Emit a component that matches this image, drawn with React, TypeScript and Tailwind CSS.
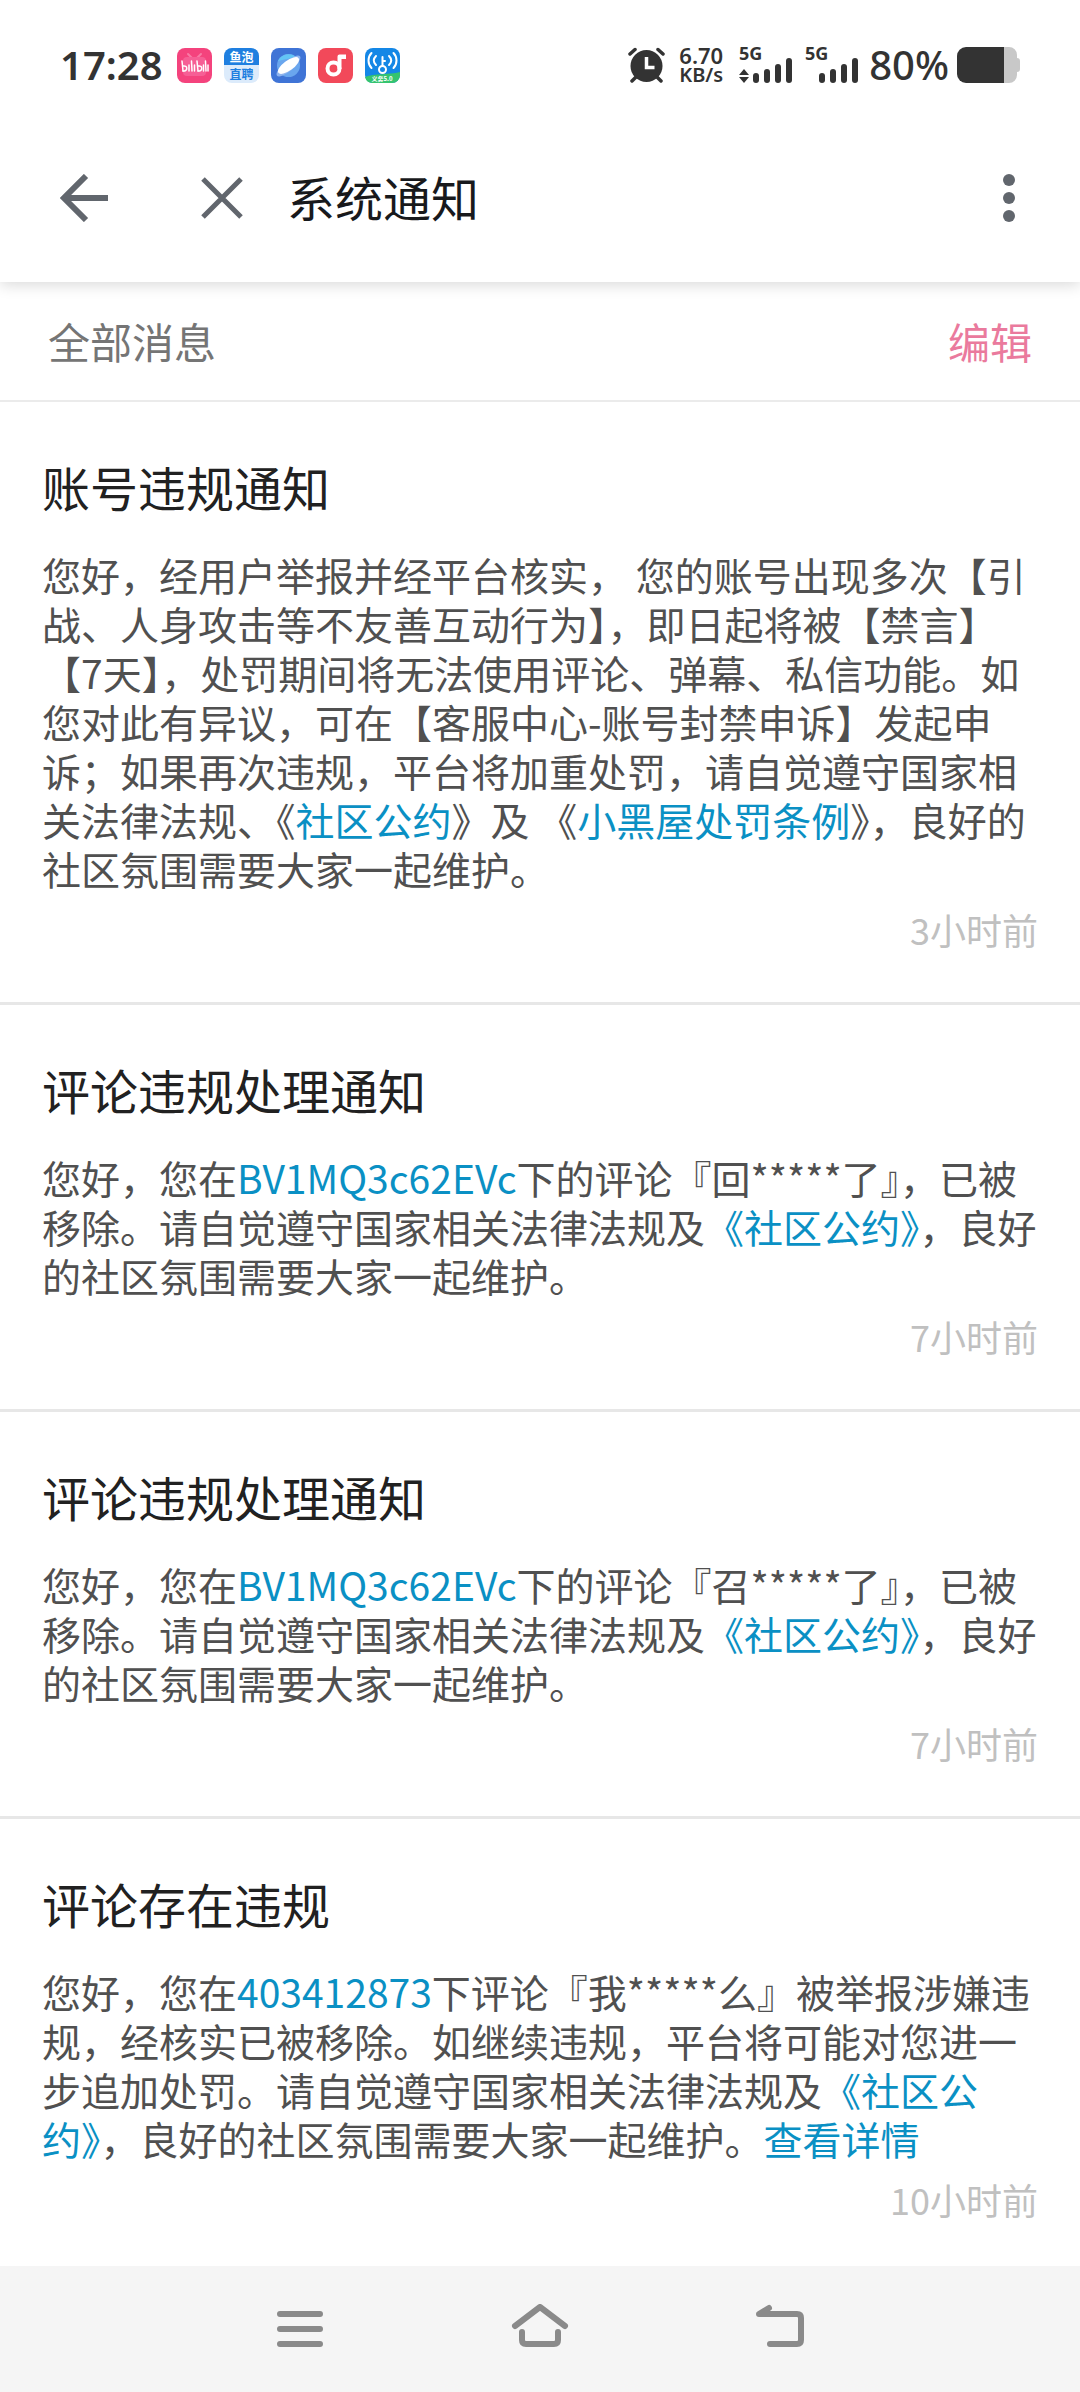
import type { ReactNode } from 'react';

type Notice = {
  id: number;
  title: string;
  time: string;
  body: ReactNode;
};

function TextLink({ children }: { children: ReactNode }) {
  return (
    <a href="#" className="text-[#0a90c4]">
      {children}
    </a>
  );
}

const notices: Notice[] = [
  {
    id: 1,
    title: '账号违规通知',
    time: '3小时前',
    body: (
      <>
        您好，经用户举报并经平台核实， 您的账号出现多次【引战、人身攻击等不友善互动行为】，即日起将被【禁言】【7天】，处罚期间将无法使用评论、弹幕、私信功能。如您对此有异议，可在【客服中心-账号封禁申诉】发起申诉；如果再次违规，平台将加重处罚，请自觉遵守国家相关法律法规、《<TextLink>社区公约</TextLink>》及 《<TextLink>小黑屋处罚条例</TextLink>》，良好的社区氛围需要大家一起维护。
      </>
    ),
  },
  {
    id: 2,
    title: '评论违规处理通知',
    time: '7小时前',
    body: (
      <>
        您好，您在<TextLink>BV1MQ3c62EVc</TextLink>下的评论『回*****了』，已被移除。请自觉遵守国家相关法律法规及<TextLink>《社区公约》</TextLink>，良好的社区氛围需要大家一起维护。
      </>
    ),
  },
  {
    id: 3,
    title: '评论违规处理通知',
    time: '7小时前',
    body: (
      <>
        您好，您在<TextLink>BV1MQ3c62EVc</TextLink>下的评论『召*****了』，已被移除。请自觉遵守国家相关法律法规及<TextLink>《社区公约》</TextLink>，良好的社区氛围需要大家一起维护。
      </>
    ),
  },
  {
    id: 4,
    title: '评论存在违规',
    time: '10小时前',
    body: (
      <>
        您好，您在<TextLink>403412873</TextLink>下评论『我*****么』被举报涉嫌违规，经核实已被移除。如继续违规，平台将可能对您进一步追加处罚。请自觉遵守国家相关法律法规及<TextLink>《社区公约》</TextLink>，良好的社区氛围需要大家一起维护。<TextLink>查看详情</TextLink>
      </>
    ),
  },
];

function BilibiliIcon() {
  return (
    <svg width="35" height="35" viewBox="0 0 35 35" aria-hidden="true">
      <rect width="35" height="35" rx="8" fill="#f4437d" />
      <path d="M11 6l4 4M24 6l-4 4" stroke="#f77ba5" strokeWidth="2" strokeLinecap="round" />
      <rect x="6" y="9" width="23" height="19" rx="4" fill="#f65f95" />
      <g stroke="#fff" strokeWidth="1.5" strokeLinecap="round" fill="none">
        <path d="M5 13l1 10M12 17v6M14.500 13l.5 10M17.500 17v6M20 13l1 10M26.500 17v6M28.500 13l.5 10M31 17v6" />
        <path d="M6 18c5-1 5 5 0 5M21 18c5-1 5 5 0 5" />
      </g>
    </svg>
  );
}

function YupaoIcon() {
  return (
    <svg width="35" height="35" viewBox="0 0 35 35" aria-hidden="true">
      <rect width="35" height="35" rx="8" fill="#dcebfb" />
      <path d="M0 17V8a8 8 0 0 1 8-8h19a8 8 0 0 1 8 8v9z" fill="#1f7fe0" />
      <g fontFamily="'Noto Sans CJK SC', sans-serif" fontWeight="700" fontSize="12" textAnchor="middle">
        <text x="17.500" y="14" fill="#fff">鱼泡</text>
        <text x="17.500" y="31" fill="#1f7fe0">直聘</text>
      </g>
    </svg>
  );
}

function BrowserIcon() {
  return (
    <svg width="35" height="35" viewBox="0 0 35 35" aria-hidden="true">
      <rect width="35" height="35" rx="8" fill="#3f74d6" />
      <circle cx="17.500" cy="17.500" r="11.500" fill="#6aa6ee" />
      <path d="M7 13a11.500 11.500 0 0 1 18-4z" fill="#63c5f5" />
      <ellipse cx="17.500" cy="18" rx="15" ry="5" transform="rotate(-40 17.500 18)" fill="#8fb4ee" />
      <ellipse cx="17.500" cy="17.500" rx="12.500" ry="5" transform="rotate(-36 17.500 17.500)" fill="#fff" />
    </svg>
  );
}

function MusicIcon() {
  return (
    <svg width="35" height="35" viewBox="0 0 35 35" aria-hidden="true">
      <rect width="35" height="35" rx="8" fill="#f2495a" />
      <circle cx="15.500" cy="20.500" r="6" fill="none" stroke="#fff" strokeWidth="4" />
      <path d="M19.500 21V8.500a2 2 0 0 1 2-2H28V11h-4.500v10z" fill="#fff" />
    </svg>
  );
}

function WifiKeyIcon() {
  return (
    <svg width="35" height="35" viewBox="0 0 35 35" aria-hidden="true">
      <rect width="35" height="35" rx="8" fill="#1487e6" />
      <path d="M0 29c10-4 24-2 35-5v3a8 8 0 0 1-8 8H8a8 8 0 0 1-8-6z" fill="#35c46f" />
      <g fill="none" stroke="#fff" strokeWidth="2" strokeLinecap="round">
        <path d="M6.500 5c-4 4-4 11 0 15M11 8c-3 3-3 6 0 9M28.500 5c4 4 4 11 0 15M24 8c3 3 3 6 0 9" />
        <path d="M17.500 18V9M18 13h2" />
        <circle cx="17.500" cy="21.500" r="3.500" />
      </g>
      <text x="17" y="33" fill="#fff" fontFamily="'Noto Sans CJK SC', sans-serif" fontSize="6" fontWeight="700" textAnchor="middle">
        义务5.0
      </text>
    </svg>
  );
}

function AlarmIcon() {
  return (
    <svg width="37" height="36" viewBox="0 0 37 36" aria-hidden="true">
      <g stroke="#333" strokeWidth="3.500" strokeLinecap="round">
        <path d="M2 7l5-4.500M35 7l-5-4.500" />
        <path d="M8 30l-4 4M29 30l4 4" />
      </g>
      <circle cx="18.500" cy="19" r="16" fill="#333" />
      <path d="M18.500 10v10.500h8" fill="none" stroke="#fff" strokeWidth="3.500" />
    </svg>
  );
}

function SignalIcon({ active = false }: { active?: boolean }) {
  return (
    <svg width="54" height="52" viewBox="0 -8 54 52" fill="#333" role="img" aria-label="5G">
      <text x="0" y="13" fontFamily="'Noto Sans', sans-serif" fontSize="18" fontWeight="700">
        5G
      </text>
      {active && <path d="M0 28l5-6 5 6zM0 30l5 6 5-6z" />}
      <rect x="14" y="26" width="6" height="10" rx="3" />
      <rect x="25" y="22" width="6" height="14" rx="3" />
      <rect x="36" y="17" width="6" height="19" rx="3" />
      <rect x="47" y="11" width="6" height="25" rx="3" />
    </svg>
  );
}

function BatteryIcon() {
  return (
    <svg width="63" height="36" viewBox="0 0 63 36" aria-hidden="true">
      <path d="M47 0h5a8 8 0 0 1 8 8v3a3 3 0 0 1 3 3v8a3 3 0 0 1-3 3v3a8 8 0 0 1-8 8h-5z" fill="#c8c8c8" />
      <path d="M9 0h38v36H9a9 9 0 0 1-9-9V9a9 9 0 0 1 9-9z" fill="#333" />
    </svg>
  );
}

function StatusBar() {
  return (
    <div className="flex h-[114px] items-center justify-between px-[60px] pt-4 font-['Noto_Sans',sans-serif] text-[#333]">
      <div className="flex items-center gap-3.5">
        <span className="text-[40px] leading-none font-semibold">17:28</span>
        <div className="flex gap-3">
          <BilibiliIcon />
          <YupaoIcon />
          <BrowserIcon />
          <MusicIcon />
          <WifiKeyIcon />
        </div>
      </div>
      <div className="flex items-center">
        <AlarmIcon />
        <div className="mr-4 ml-3.5 flex flex-col items-end font-semibold">
          <span className="text-[22px] leading-5">6.70</span>
          <span className="text-[20px] leading-5">KB/s</span>
        </div>
        <SignalIcon active />
        <span className="ml-3">
          <SignalIcon />
        </span>
        <span className="mr-2 ml-2.5 text-[40px] leading-none font-medium">80%</span>
        <BatteryIcon />
      </div>
    </div>
  );
}

function Header() {
  return (
    <header className="relative z-10 bg-white shadow-[0_3px_14px_rgba(0,0,0,0.15)]">
      <StatusBar />
      <div className="flex h-[168px] items-center px-[60px] text-[#61666d]">
        <button type="button" aria-label="返回">
          <svg width="48" height="48" viewBox="0 0 48 48" fill="none" stroke="currentColor" strokeWidth="6">
            <path d="M48 24H5M26 2L4 24l22 22" />
          </svg>
        </button>
        <button type="button" aria-label="关闭" className="ml-[93px]">
          <svg width="42" height="42" viewBox="0 0 42 42" fill="none" stroke="currentColor" strokeWidth="5">
            <path d="M2 2l38 38M40 2L2 40" />
          </svg>
        </button>
        <h1 className="ml-11 flex-1 pb-1 text-[48px] leading-[60px] text-[#18191c]">系统通知</h1>
        <button type="button" aria-label="更多" className="-mr-1">
          <svg width="30" height="48" viewBox="0 0 30 48" fill="currentColor">
            <circle cx="15" cy="6" r="6" />
            <circle cx="15" cy="24" r="6" />
            <circle cx="15" cy="42" r="6" />
          </svg>
        </button>
      </div>
    </header>
  );
}

function NoticeItem({ notice }: { notice: Notice }) {
  return (
    <li className="border-b-[3px] border-[#e7e7e7] px-[42px] pt-[54px] pb-[49px] last:border-b-0 last:pb-6">
      <h2 className="text-[48px] leading-[60px] text-[#212121]">{notice.title}</h2>
      <p className="mt-[34px] text-[39px] leading-[49px] text-[#505050]">{notice.body}</p>
      <p className="mt-3 text-right text-[36px] leading-[48px] text-[#c0c0c0]">{notice.time}</p>
    </li>
  );
}

function BottomNav() {
  return (
    <nav className="bg-[#f5f5f5] text-[#8a8a8a]">
      <div className="mx-auto grid h-[126px] w-2/3 grid-cols-3 place-items-center pb-1.5">
        <button type="button" aria-label="最近任务">
          <svg width="60" height="44" viewBox="0 0 60 44" fill="none" stroke="currentColor" strokeWidth="6" strokeLinecap="round">
            <path d="M10 10h40M10 25h40M10 40h40" />
          </svg>
        </button>
        <button type="button" aria-label="主页">
          <svg width="60" height="44" viewBox="0 0 60 44" fill="none" stroke="currentColor" strokeWidth="6" strokeLinecap="round" strokeLinejoin="round">
            <path d="M5 22L30 3l25 19" />
            <path d="M12 28v8q0 4 4 4h28q4 0 4-4v-8" />
          </svg>
        </button>
        <button type="button" aria-label="后退">
          <svg width="60" height="44" viewBox="0 0 60 44" fill="none" stroke="currentColor" strokeWidth="6" strokeLinecap="round" strokeLinejoin="round">
            <path d="M20 40h27q4 0 4-4V14q0-4-4-4H9l10-6" />
          </svg>
        </button>
      </div>
    </nav>
  );
}

export default function App() {
  return (
    <div lang="zh-CN" className="flex min-h-screen flex-col bg-white font-['Noto_Sans_CJK_SC',sans-serif]">
      <Header />
      <main className="flex-1">
        <div className="flex h-[120px] items-center justify-between border-b-2 border-[#ebebeb] px-12 text-[42px] leading-[60px]">
          <span className="text-[#757575]">全部消息</span>
          <button type="button" className="text-[#ea7a9d]">
            编辑
          </button>
        </div>
        <ul>
          {notices.map((notice) => (
            <NoticeItem key={notice.id} notice={notice} />
          ))}
        </ul>
      </main>
      <BottomNav />
    </div>
  );
}
